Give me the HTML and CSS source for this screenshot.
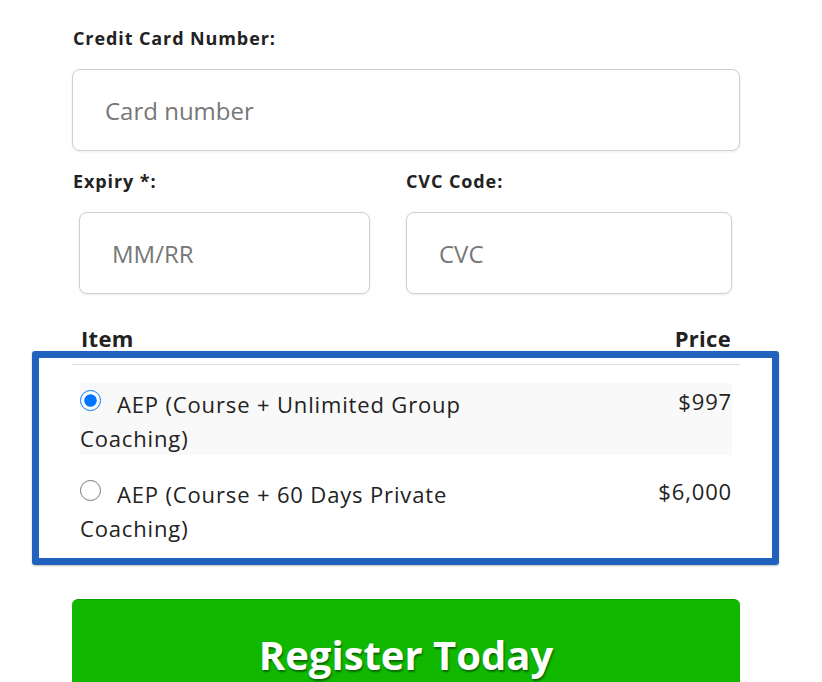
FILE: index.html
```html
<!DOCTYPE html>
<html lang="en">
<head>
<meta charset="utf-8">
<title>Payment</title>
<link rel="stylesheet" href="styles.css">
</head>
<body>
<form class="form">
  <div class="field">
    <label class="label" for="card">Credit Card Number:</label>
    <input class="input" id="card" type="text" placeholder="Card number">
  </div>
  <div class="split">
    <div class="col col-exp">
      <label class="label" for="exp">Expiry *:</label>
      <input class="input input-exp" id="exp" type="text" placeholder="MM/RR">
    </div>
    <div class="col col-cvc">
      <label class="label" for="cvc">CVC Code:</label>
      <input class="input" id="cvc" type="text" placeholder="CVC">
    </div>
  </div>
  <div class="items">
    <div class="items-head"><span>Item</span><span>Price</span></div>
    <div class="item item-selected">
      <label class="item-name"><input class="radio" type="radio" name="plan" checked>AEP (Course + Unlimited Group Coaching)</label>
      <span class="item-price">$997</span>
    </div>
    <div class="item">
      <label class="item-name"><input class="radio" type="radio" name="plan">AEP (Course + 60 Days Private Coaching)</label>
      <span class="item-price">$6,000</span>
    </div>
    <div class="highlight"></div>
  </div>
  <button class="register" type="button">Register Today</button>
</form>
</body>
</html>
```

FILE: styles.css
```css
html, body {
  margin: 0;
  padding: 0;
  background: #ffffff;
}

body {
  font-family: "Open Sans", "Liberation Sans", sans-serif;
  color: #222222;
  overflow: hidden;
}

.form {
  width: 668px;
  margin-left: 72px;
  padding-top: 27px;
}

.field {
  display: flex;
  flex-direction: column;
}

.label {
  display: block;
  font-size: 18px;
  font-weight: 700;
  line-height: 22px;
  letter-spacing: 0.9px;
  padding-left: 1px;
  margin-bottom: 20px;
}

.input {
  box-sizing: border-box;
  height: 82px;
  width: 100%;
  border: 1px solid #cfcfcf;
  border-radius: 8px;
  box-shadow: 0 1px 3px rgba(0, 0, 0, 0.08);
  padding: 0 32px;
  font-family: inherit;
  font-size: 24px;
  color: #222222;
  background: #ffffff;
  outline: none;
}

.input::placeholder {
  color: #777777;
}

.split {
  display: grid;
  grid-template-columns: 334px 326px;
  margin-top: 19px;
}

.col-exp .input-exp {
  margin-left: 7px;
  width: 291px;
}

.col-cvc .label {
  padding-left: 0;
}

.items {
  position: relative;
  margin-top: 30px;
}

.items-head {
  display: flex;
  justify-content: space-between;
  padding: 0 9px 12px 9px;
  border-bottom: 1px solid #dddddd;
  font-size: 22px;
  font-weight: 700;
  line-height: 28px;
  letter-spacing: 0.3px;
}

.item {
  display: flex;
  justify-content: space-between;
  align-items: flex-start;
  margin: 18px 8px 0 8px;
  height: 72px;
  box-sizing: border-box;
  padding-top: 4px;
  font-size: 22px;
  letter-spacing: 0.85px;
}

.item-selected {
  background: #f9f9f9;
}

.item-name {
  width: 440px;
  line-height: 34px;
}

.radio {
  width: 21px;
  height: 21px;
  margin: 3px 16px 0 0;
  vertical-align: top;
}

.item-price {
  line-height: 28px;
}

.highlight {
  position: absolute;
  top: 27px;
  left: -40px;
  width: 747px;
  height: 214px;
  box-sizing: border-box;
  border: 7px solid #2162bf;
  border-radius: 3px;
  box-shadow: 0 1px 2px rgba(0, 0, 0, 0.25);
  pointer-events: none;
}

.register {
  display: block;
  width: 100%;
  height: 96px;
  margin-top: 54px;
  padding: 14px 0 0 0;
  border: none;
  border-top: 1px solid #0c9e00;
  border-radius: 6px;
  background: #10b900;
  color: #ffffff;
  font-family: inherit;
  font-size: 40px;
  font-weight: 700;
  text-shadow: 1px 2px 2px rgba(0, 0, 0, 0.45);
  cursor: pointer;
}
```
